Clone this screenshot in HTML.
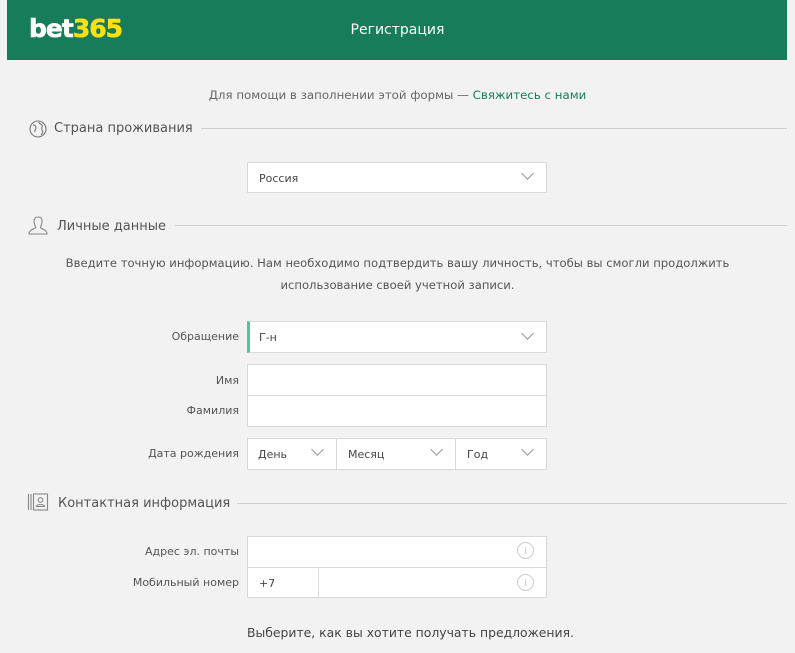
<!DOCTYPE html>
<html><head><meta charset="utf-8"><style>
*{margin:0;padding:0;box-sizing:border-box}
body{width:795px;height:653px;background:#f2f2f2;font-family:"DejaVu Sans","Liberation Sans",sans-serif;color:#545454;position:relative;overflow:hidden}
.a{position:absolute}
.hdr{left:7px;top:0;width:780px;height:60px;background:#167c5a}
.logo{left:29px;top:14px;font-family:"DejaVu Sans",sans-serif;font-weight:bold;font-size:25px;letter-spacing:-1px;color:#fff;-webkit-text-stroke:0.6px #fff}
.logo span{color:#ffe00b;-webkit-text-stroke:0.6px #ffe00b}
.title{left:0;width:795px;top:22px;text-align:center;color:#fff;font-size:14px}
.sec{font-size:13px;color:#545454}
.line{height:1px;background:#cfcfcf}
.box{background:#fff;border:1px solid #d9d9d9}
.lbl{font-size:11px;color:#545454;text-align:right;width:200px}
.t{font-size:11px;color:#444}
.chev{width:9px;height:9px;border-right:1px solid #999;border-bottom:1px solid #999;transform:rotate(45deg)}
.info{width:17px;height:17px;border:1px solid #ccc;border-radius:50%;color:#ccc;font-family:"Liberation Serif",serif;font-style:italic;font-size:12px;text-align:center;line-height:15px}
</style></head><body>
<div class="a hdr"></div>
<div class="a logo">bet<span>365</span></div>
<div class="a title">Регистрация</div>
<div class="a" style="left:0;width:795px;top:88px;text-align:center;font-size:11.8px;color:#666">Для помощи в заполнении этой формы — <span style="color:#167c5a">Свяжитесь с нами</span></div>

<svg class="a" style="left:29px;top:120px" width="18" height="18" viewBox="0 0 18 18" fill="none" stroke="#777" stroke-width="1.1"><circle cx="9" cy="9" r="8"/><path d="M4 5c2 0 3 1 3 3s-2 2-1 4M10 2c0 2 2 2 3 3s-1 3 0 5 1 3-1 5"/></svg>
<div class="a sec" style="left:54px;top:121px">Страна проживания</div>
<div class="a line" style="left:201px;top:128px;width:586px"></div>
<div class="a box" style="left:247px;top:162px;width:300px;height:31px"></div>
<div class="a t" style="left:259px;top:172px">Россия</div>
<div class="a chev" style="left:523px;top:169px"></div>

<svg class="a" style="left:28px;top:216px" width="20" height="19" viewBox="0 0 20 19" fill="none" stroke="#888" stroke-width="1.1"><path d="M10 1c-3 0-4 2-4 4.5S7.5 10 7.5 11.5 1 13 1 18h18c0-5-6.5-5-6.5-6.5S14 9 14 5.5 13 1 10 1z"/></svg>
<div class="a sec" style="left:57px;top:219px">Личные данные</div>
<div class="a line" style="left:175px;top:225px;width:612px"></div>
<div class="a" style="left:0;width:795px;top:252px;text-align:center;font-size:11.6px;line-height:22px;color:#555">Введите точную информацию. Нам необходимо подтвердить вашу личность, чтобы вы смогли продолжить<br>использование своей учетной записи.</div>

<div class="a lbl" style="left:39px;top:330px">Обращение</div>
<div class="a box" style="left:247px;top:321px;width:300px;height:32px;border-left:3px solid #55c39b"></div>
<div class="a t" style="left:259px;top:331px">Г-н</div>
<div class="a chev" style="left:523px;top:329px"></div>

<div class="a lbl" style="left:39px;top:374px">Имя</div>
<div class="a lbl" style="left:39px;top:404px">Фамилия</div>
<div class="a box" style="left:247px;top:364px;width:300px;height:63px"></div>
<div class="a line" style="left:248px;top:395px;width:298px;background:#d9d9d9"></div>

<div class="a lbl" style="left:39px;top:447px">Дата рождения</div>
<div class="a box" style="left:247px;top:438px;width:300px;height:32px"></div>
<div class="a line" style="left:336px;top:439px;width:1px;height:30px;background:#d9d9d9"></div>
<div class="a line" style="left:455px;top:439px;width:1px;height:30px;background:#d9d9d9"></div>
<div class="a t" style="left:258px;top:448px">День</div>
<div class="a t" style="left:348px;top:448px">Месяц</div>
<div class="a t" style="left:467px;top:448px">Год</div>
<div class="a chev" style="left:313px;top:445px"></div>
<div class="a chev" style="left:432px;top:445px"></div>
<div class="a chev" style="left:523px;top:445px"></div>

<svg class="a" style="left:27px;top:493px" width="22" height="18" viewBox="0 0 22 18" fill="none" stroke="#888" stroke-width="1.1"><path d="M1.5 1v16M4 1v16"/><rect x="6.5" y="1" width="14" height="16"/><circle cx="13.5" cy="7" r="2.3"/><path d="M9.5 13.5c0-2.5 8-2.5 8 0z"/></svg>
<div class="a sec" style="left:58px;top:496px">Контактная информация</div>
<div class="a line" style="left:237px;top:503px;width:550px"></div>

<div class="a lbl" style="left:39px;top:545px">Адрес эл. почты</div>
<div class="a lbl" style="left:39px;top:576px">Мобильный номер</div>
<div class="a box" style="left:247px;top:536px;width:300px;height:62px"></div>
<div class="a line" style="left:248px;top:567px;width:298px;background:#d9d9d9"></div>
<div class="a line" style="left:318px;top:568px;width:1px;height:29px;background:#d9d9d9"></div>
<div class="a t" style="left:259px;top:577px">+7</div>
<div class="a info" style="left:517px;top:542px">i</div>
<div class="a info" style="left:517px;top:574px">i</div>

<div class="a" style="left:247px;top:625px;font-size:12.4px;color:#444">Выберите, как вы хотите получать предложения.</div>
</body></html>
